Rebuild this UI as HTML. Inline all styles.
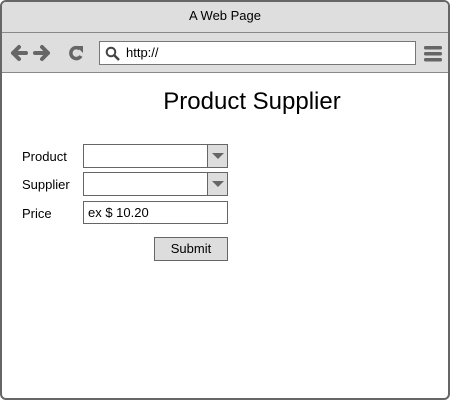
<!DOCTYPE html>
<html><head><style>
*{box-sizing:border-box;margin:0;padding:0}
body{width:450px;height:400px;background:#fff;font-family:"Liberation Sans",Arial,sans-serif;position:relative;overflow:hidden}
.frame{position:absolute;left:0;top:0;width:450px;height:400px;border:2px solid #666;border-radius:6px;overflow:hidden;background:#fff}
.title{position:absolute;left:0;top:0;width:446px;height:31px;background:#dedede;border-bottom:1px solid #888;text-align:center;font-size:13px;line-height:27px;color:#000}
.tool{position:absolute;left:0;top:31px;width:446px;height:40px;background:#dedede;border-bottom:1px solid #888}
.addr{position:absolute;left:97px;top:8px;width:317px;height:24px;background:#fff;border:1px solid #777;font-size:13px;line-height:22px;padding-left:26px}
.abs{position:absolute}
.lbl{position:absolute;font-size:13px;color:#000}
.sel{position:absolute;left:81px;width:145px;height:24px;border:1px solid #666;background:#fff}
.sel .ar{position:absolute;right:0;top:0;width:20px;height:22px;background:#ddd;border-left:1px solid #666}
.sel .ar:after{content:"";position:absolute;left:4px;top:8px;border-left:6px solid transparent;border-right:6px solid transparent;border-top:6px solid #666}
</style></head><body>
<div class="frame">
<div class="title">A Web Page</div>
<div class="tool">
<svg class="abs" style="left:8px;top:10px" width="80" height="20" viewBox="0 0 80 20">
<path d="M9 4 L3 10 L9 16 M3 10 L16 10" stroke="#666" stroke-width="4" fill="none" stroke-linejoin="round" stroke-linecap="round"/>
<path d="M32 4 L38 10 L32 16 M38 10 L25 10" stroke="#666" stroke-width="4" fill="none" stroke-linejoin="round" stroke-linecap="round"/>
<path d="M70 6 A5.5 5.5 0 1 0 71 13" stroke="#666" stroke-width="3.5" fill="none"/>
<path d="M66 3 L73 3 L73 10 Z" fill="#666"/>
</svg>
<div class="addr">http://</div>
<svg class="abs" style="left:103px;top:13px" width="16" height="16" viewBox="0 0 16 16">
<circle cx="6" cy="6" r="4.3" stroke="#444" stroke-width="2" fill="none"/>
<path d="M9 9 L14 14" stroke="#444" stroke-width="2.5"/>
</svg>
<svg class="abs" style="left:421px;top:12px" width="20" height="18" viewBox="0 0 20 18">
<rect x="1" y="1" width="18" height="3.5" rx="1.5" fill="#666"/>
<rect x="1" y="7" width="18" height="3.5" rx="1.5" fill="#666"/>
<rect x="1" y="13" width="18" height="3.5" rx="1.5" fill="#666"/>
</svg>
</div>
<div class="lbl" style="left:0;width:446px;top:86px;text-align:center;font-size:24px;padding-left:54px">Product Supplier</div>
<div class="lbl" style="left:20px;top:147px">Product</div>
<div class="sel" style="top:142px"><div class="ar"></div></div>
<div class="lbl" style="left:20px;top:175px">Supplier</div>
<div class="sel" style="top:170px"><div class="ar"></div></div>
<div class="lbl" style="left:20px;top:204px">Price</div>
<div class="abs" style="left:81px;top:199px;width:145px;height:23px;border:1px solid #666;font-size:13px;line-height:21px;padding-left:4px">ex $ 10.20</div>
<div class="abs" style="left:152px;top:235px;width:74px;height:24px;border:1px solid #666;background:#ddd;font-size:13px;line-height:22px;text-align:center">Submit</div>
</div>
</body></html>
